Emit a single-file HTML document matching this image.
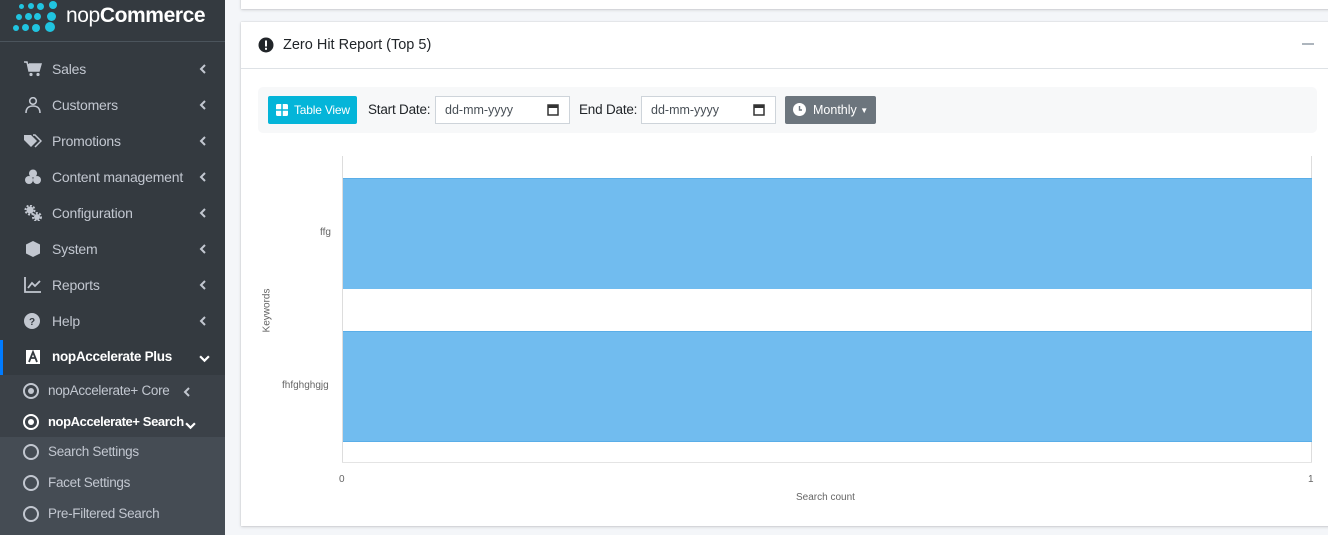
<!DOCTYPE html>
<html><head><meta charset="utf-8"><style>
*{box-sizing:border-box;margin:0;padding:0}
body{width:1328px;height:535px;overflow:hidden;background:#f4f6f9;font-family:"Liberation Sans",sans-serif;position:relative}
.sb{position:absolute;left:0;top:0;width:225px;height:535px;background:#343a40}
.logo{position:absolute;left:0;top:0;width:225px;height:42px;border-bottom:1px solid #4b545c}
.dot{position:absolute;border-radius:50%;background:#20c4e0}
.logo .t{position:absolute;left:66px;top:4px;color:#fff;font-size:21px;letter-spacing:-0.4px}
.it{position:absolute;left:0;width:225px;height:36px;color:#c2c7d0;font-size:14px;line-height:36px;letter-spacing:-0.2px}
.it .ic{position:absolute;left:24px;top:10px;width:18px;height:16px}
.it .tx{position:absolute;left:52px}
.ch{position:absolute;left:199px;top:13px;width:7px;height:10px}
.sub{position:absolute;left:0;width:225px;height:31px;color:#c2c7d0;font-size:13.5px;line-height:31px;letter-spacing:-0.3px}
.sub .c{position:absolute;left:23px;top:8px;width:16px;height:16px;border:2px solid #c2c7d0;border-radius:50%}
.sub .tx{position:absolute;left:48px}
.card{position:absolute;background:#fff;box-shadow:0 0 1px rgba(0,0,0,.2),0 1px 3px rgba(0,0,0,.15)}
.lbl{position:absolute;font-size:13.5px;color:#212529;top:102px;letter-spacing:-0.2px}
.inp{position:absolute;top:96px;height:28px;border:1px solid #ced4da;background:#fff;font-size:12.5px;color:#495057;line-height:26px;padding-left:9px}
.small{position:absolute;font-size:10px;color:#666;font-family:"Liberation Sans",sans-serif}
</style></head><body>
<svg width="0" height="0" style="position:absolute"><defs><symbol id="chv" viewBox="0 0 7 10"><path d="M6 1L2 5l4 4" fill="none" stroke="#c2c7d0" stroke-width="2"/></symbol><symbol id="dwn" viewBox="0 0 10 7"><path d="M1 1l4 4 4-4" fill="none" stroke="#fff" stroke-width="2"/></symbol></defs></svg>
<div class="sb">
 <div class="logo">
  <div class="dot" style="left:19px;top:4px;width:5px;height:5px"></div>
  <div class="dot" style="left:28px;top:3px;width:6px;height:6px"></div>
  <div class="dot" style="left:37px;top:3px;width:7px;height:7px"></div>
  <div class="dot" style="left:49px;top:1px;width:8px;height:8px"></div>
  <div class="dot" style="left:16px;top:14px;width:6px;height:6px"></div>
  <div class="dot" style="left:25px;top:13px;width:7px;height:7px"></div>
  <div class="dot" style="left:34px;top:13px;width:7px;height:7px"></div>
  <div class="dot" style="left:47px;top:12px;width:9px;height:9px"></div>
  <div class="dot" style="left:13px;top:25px;width:6px;height:6px"></div>
  <div class="dot" style="left:22px;top:24px;width:7px;height:7px"></div>
  <div class="dot" style="left:32px;top:24px;width:8px;height:8px"></div>
  <div class="dot" style="left:45px;top:22px;width:10px;height:10px"></div>
  <div class="t">nop<b>Commerce</b></div>
 </div>
 <div class="it" style="top:51px"><svg class="ic" viewBox="0 0 18 16"><path d="M0 1h3l2 9h10l2-7H5" fill="#c2c7d0" stroke="#c2c7d0" stroke-width="1.5"/><circle cx="7" cy="13.5" r="1.6" fill="#c2c7d0"/><circle cx="14" cy="13.5" r="1.6" fill="#c2c7d0"/></svg><span class="tx">Sales</span><svg class="ch"><use href="#chv"/></svg></div>
 <div class="it" style="top:87px"><svg class="ic" viewBox="0 0 18 16"><circle cx="9" cy="4" r="3.3" fill="none" stroke="#c2c7d0" stroke-width="1.6"/><path d="M2 16c0-5 3-7 7-7s7 2 7 7" fill="none" stroke="#c2c7d0" stroke-width="1.6"/></svg><span class="tx">Customers</span><svg class="ch"><use href="#chv"/></svg></div>
 <div class="it" style="top:123px"><svg class="ic" viewBox="0 0 18 16"><path d="M0 2h7l6 6-6 6-7-7z" fill="#c2c7d0"/><path d="M9 2h2l6 6-6 6" fill="none" stroke="#c2c7d0" stroke-width="1.5"/></svg><span class="tx">Promotions</span><svg class="ch"><use href="#chv"/></svg></div>
 <div class="it" style="top:159px"><svg class="ic" viewBox="0 0 18 16"><circle cx="9" cy="4.5" r="4" fill="#c2c7d0"/><circle cx="5" cy="11" r="4" fill="#c2c7d0"/><circle cx="13" cy="11" r="4" fill="#c2c7d0"/></svg><span class="tx">Content management</span><svg class="ch"><use href="#chv"/></svg></div>
 <div class="it" style="top:195px"><svg class="ic" viewBox="0 0 18 16"><circle cx="6" cy="5" r="3.5" fill="#c2c7d0"/><circle cx="6" cy="5" r="4.5" fill="none" stroke="#c2c7d0" stroke-width="2" stroke-dasharray="2 1.5"/><circle cx="13" cy="12" r="3" fill="#c2c7d0"/><circle cx="13" cy="12" r="4" fill="none" stroke="#c2c7d0" stroke-width="2" stroke-dasharray="2 1.5"/></svg><span class="tx">Configuration</span><svg class="ch"><use href="#chv"/></svg></div>
 <div class="it" style="top:231px"><svg class="ic" viewBox="0 0 18 16"><path d="M9 0l7 3.5v9L9 16 2 12.5v-9z" fill="#c2c7d0"/></svg><span class="tx">System</span><svg class="ch"><use href="#chv"/></svg></div>
 <div class="it" style="top:267px"><svg class="ic" viewBox="0 0 18 16"><path d="M1 0v15h16" fill="none" stroke="#c2c7d0" stroke-width="1.8"/><path d="M4 11l4-5 3 3 5-5" fill="none" stroke="#c2c7d0" stroke-width="1.8"/></svg><span class="tx">Reports</span><svg class="ch"><use href="#chv"/></svg></div>
 <div class="it" style="top:303px"><svg class="ic" viewBox="0 0 18 16"><circle cx="8" cy="8" r="8" fill="#c2c7d0"/><text x="8" y="12" font-size="10" text-anchor="middle" fill="#343a40" font-family="Liberation Sans" font-weight="bold">?</text></svg><span class="tx">Help</span><svg class="ch"><use href="#chv"/></svg></div>
 <div style="position:absolute;left:0;top:340px;width:3px;height:35px;background:#007bff"></div>
 <div class="it" style="top:339px;color:#fff;font-weight:bold;font-size:13.5px;letter-spacing:-0.3px"><svg class="ic" viewBox="0 0 14 14" style="left:26px;top:11px;width:14px;height:14px"><rect width="14" height="14" fill="#fff"/><path d="M3 12L7 2l4 10M5 8h4" stroke="#343a40" stroke-width="1.8" fill="none"/></svg><span class="tx">nopAccelerate Plus</span><svg style="position:absolute;left:199px;top:16px;width:11px;height:8px"><use href="#dwn"/></svg></div>
 <div style="position:absolute;left:0;top:375px;width:225px;height:62px;background:#3b4148"></div>
 <div style="position:absolute;left:0;top:437px;width:225px;height:98px;background:#454c54"></div>
 <div class="sub" style="top:375px"><span class="c"><span style="position:absolute;left:3px;top:3px;width:6px;height:6px;border-radius:50%;background:#c2c7d0"></span></span><span class="tx">nopAccelerate+ Core</span><svg class="ch" style="left:183px;top:12px"><use href="#chv"/></svg></div>
 <div class="sub" style="top:406px;color:#fff;font-weight:bold;font-size:13px;letter-spacing:-0.4px"><span class="c" style="border-color:#fff"><span style="position:absolute;left:3px;top:3px;width:6px;height:6px;border-radius:50%;background:#fff"></span></span><span class="tx">nopAccelerate+ Search</span><svg style="position:absolute;left:185px;top:16px;width:11px;height:8px"><use href="#dwn"/></svg></div>
 <div class="sub" style="top:436px"><span class="c"></span><span class="tx">Search Settings</span></div>
 <div class="sub" style="top:467px"><span class="c"></span><span class="tx">Facet Settings</span></div>
 <div class="sub" style="top:498px"><span class="c"></span><span class="tx">Pre-Filtered Search</span></div>
</div>
<div class="card" style="left:241px;top:-5px;width:1090px;height:14px"></div>
<div class="card" style="left:241px;top:22px;width:1090px;height:504px"></div>
<svg style="position:absolute;left:258px;top:37px" width="16" height="16"><circle cx="8" cy="8" r="7.5" fill="#212529"/><rect x="7" y="3.5" width="2" height="6" fill="#fff"/><rect x="7" y="10.8" width="2" height="2" fill="#fff"/></svg>
<div style="position:absolute;left:283px;top:37px;font-size:14.5px;color:#212529">Zero Hit Report (Top 5)</div>
<div style="position:absolute;left:1302px;top:43px;width:12px;height:1.5px;background:#adb5bd"></div>
<div style="position:absolute;left:241px;top:68px;width:1087px;height:1px;background:#dee2e6"></div>
<div style="position:absolute;left:258px;top:87px;width:1059px;height:46px;background:#f7f8f9;border-radius:5px"></div>
<div style="position:absolute;left:268px;top:96px;width:89px;height:28px;background:#04b5d9;border-radius:2px;color:#fff;font-size:12px;line-height:28px;padding-left:26px;letter-spacing:-0.2px">Table View</div>
<svg style="position:absolute;left:276px;top:104px" width="12" height="12"><rect width="12" height="12" rx="1.5" fill="#fff"/><path d="M6 0v12M0 6h12" stroke="#04b5d9" stroke-width="1.5"/></svg>
<div class="lbl" style="left:368px">Start Date:</div>
<div class="inp" style="left:435px;width:135px">dd-mm-yyyy</div>
<div class="lbl" style="left:579px">End Date:</div>
<div class="inp" style="left:641px;width:135px">dd-mm-yyyy</div>
<svg style="position:absolute;left:547px;top:103px" width="12" height="13"><rect x="1" y="2" width="10" height="10" fill="none" stroke="#333" stroke-width="1.5"/><rect x="1" y="2" width="10" height="3" fill="#333"/></svg>
<svg style="position:absolute;left:753px;top:103px" width="12" height="13"><rect x="1" y="2" width="10" height="10" fill="none" stroke="#333" stroke-width="1.5"/><rect x="1" y="2" width="10" height="3" fill="#333"/></svg>
<div style="position:absolute;left:785px;top:96px;width:91px;height:28px;background:#6c757d;border-radius:2px;color:#fff;font-size:12.5px;line-height:28px;padding-left:28px">Monthly <span style="font-size:8px;vertical-align:1px">&#9660;</span></div>
<svg style="position:absolute;left:793px;top:103px" width="13" height="13"><circle cx="6.5" cy="6.5" r="6.5" fill="#fff"/><path d="M6.5 3v4h2.5" stroke="#6c757d" stroke-width="1.4" fill="none"/></svg>
<div style="position:absolute;left:342px;top:156px;width:1px;height:307px;background:#ddd"></div>
<div style="position:absolute;left:1311px;top:156px;width:1px;height:307px;background:#ddd"></div>
<div style="position:absolute;left:342px;top:462px;width:970px;height:1px;background:#e4e4e4"></div>
<div style="position:absolute;left:343px;top:178px;width:969px;height:111px;background:#71bcef;border-top:1px solid #5aaee8"></div>
<div style="position:absolute;left:343px;top:331px;width:969px;height:111px;background:#71bcef;border-top:1px solid #5aaee8;border-bottom:1px solid #5aaee8"></div>
<div class="small" style="left:320px;top:227px">ffg</div>
<div class="small" style="left:282px;top:380px">fhfghghgjg</div>
<div class="small" style="left:339px;top:474px">0</div>
<div class="small" style="left:1308px;top:474px">1</div>
<div class="small" style="left:796px;top:492px">Search count</div>
<div class="small" style="left:245px;top:305px;transform:rotate(-90deg);transform-origin:center">Keywords</div>
</body></html>
